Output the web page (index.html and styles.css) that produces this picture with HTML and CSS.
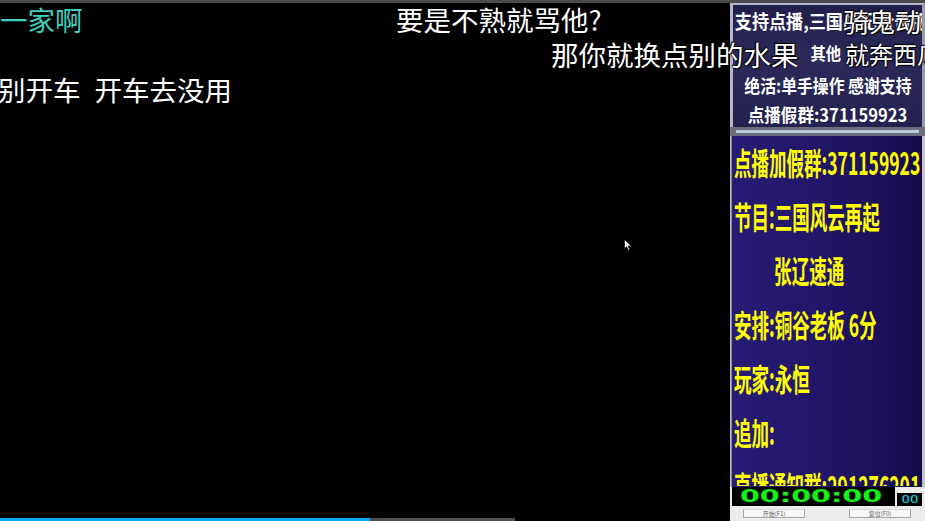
FILE: index.html
```html
<!DOCTYPE html>
<html lang="zh-CN">
<head>
<meta charset="utf-8">
<title>直播画面</title>
<link rel="stylesheet" href="styles.css">
</head>
<body>
<div class="stage">
  <div class="topline"></div>
  <div class="main">
    <div class="video">
      <div class="video-area"></div>
      <div class="progress">
        <div class="progress-played"></div>
        <div class="progress-buffer"></div>
      </div>
    </div>
    <aside class="side">
      <div class="notice">
        <div class="notice-line notice-first">支持点播,三国战纪合击版本</div>
        <div class="notice-line notice-second">其他</div>
        <div class="notice-line notice-center">绝活:单手操作 感谢支持</div>
        <div class="notice-line notice-center notice-last">点播假群:371159923</div>
      </div>
      <div class="divider"><div class="divider-light"></div></div>
      <div class="program">
        <div class="yl">点播加假群:371159923</div>
        <div class="yl">节目:三国风云再起</div>
        <div class="yl yl-indent">张辽速通</div>
        <div class="yl">安排:铜谷老板 6分</div>
        <div class="yl">玩家:永恒</div>
        <div class="yl">追加:</div>
        <div class="yl yl-cut">直播通知群:291276201</div>
      </div>
      <div class="timer">
        <div class="timer-row">
          <div class="clock"><span class="clock-text">00:00:00</span></div>
          <div class="ms"><span class="ms-text">00</span></div>
        </div>
        <div class="timer-buttons">
          <div class="tbtn">开始(F1)</div>
          <div class="tbtn">复位(F0)</div>
        </div>
      </div>
    </aside>
  </div>

  <div class="dm dm-cyan dm-1">一家啊</div>
  <div class="dm dm-2">要是不熟就骂他?</div>
  <div class="dm dm-3">那你就换点别的水果</div>
  <div class="dm dm-4">就奔西瓜</div>
  <div class="dm dm-5">别开车<span class="dm-gap"></span>开车去没用</div>
  <div class="dm dm-6">骑鬼动</div>

  <svg class="cursor" width="8" height="12" viewBox="0 0 8 12">
    <path d="M0.5 0.5 L0.5 9.5 L2.6 7.6 L4.2 11.2 L5.6 10.6 L4.1 7.1 L7 7.1 Z" fill="#fff" stroke="#222" stroke-width="0.8"/>
  </svg>
</div>
</body>
</html>
```

FILE: styles.css
```css
* { box-sizing: border-box; margin: 0; padding: 0; }

html, body {
  width: 925px;
  height: 521px;
  background: #000;
  overflow: hidden;
}

body {
  font-family: "Noto Sans CJK SC", "Noto Sans", sans-serif;
}

.stage {
  position: relative;
  width: 925px;
  height: 521px;
  background: #000;
  overflow: hidden;
  display: flex;
  flex-direction: column;
}

.topline {
  height: 3px;
  flex: 0 0 3px;
  background: #4b4b4b;
}

.main {
  flex: 1;
  display: flex;
  min-height: 0;
}

/* video area */
.video {
  width: 730px;
  flex: 0 0 730px;
  display: flex;
  flex-direction: column;
}

.video-area {
  flex: 1;
  background: #000;
}

.progress {
  height: 3px;
  flex: 0 0 3px;
  display: flex;
}

.progress-played {
  width: 370px;
  background: #08a6ec;
}

.progress-buffer {
  width: 145px;
  background: #4e4e4e;
}

/* side panel */
.side {
  flex: 1;
  display: flex;
  flex-direction: column;
  background: #b9b9c4;
  min-width: 0;
}

.notice {
  height: 124px;
  flex: 0 0 124px;
  margin-left: 1px;
  border-top: 2px solid #b6b6c6;
  border-left: 2px solid #b6b6c6;
  border-right: 3px solid #9a9aaa;
  background: linear-gradient(180deg, #21204c 0%, #2b2a5a 45%, #23214e 100%);
  color: #fff;
  font-weight: 700;
  overflow: hidden;
}

.notice-line {
  white-space: nowrap;
  font-size: 18px;
}

.notice-first {
  font-size: 19px;
  line-height: 31px;
  transform: scaleX(0.9);
  transform-origin: left center;
  padding-left: 2px;
}

.notice-second {
  line-height: 33px;
  padding-left: 86px;
  font-size: 17px;
  transform: scaleX(0.9);
  transform-origin: left center;
}

.notice-center {
  text-align: center;
  line-height: 33px;
  transform: scaleX(0.88);
}

.notice-last {
  line-height: 25px;
  transform: scaleX(0.92);
}

.divider {
  height: 9px;
  flex: 0 0 9px;
  background: #6c6c7c;
  padding: 3px 6px 2px 6px;
}

.divider-light {
  height: 3px;
  background: #b7ccd4;
}

.program {
  flex: 1;
  margin-left: 1px;
  border-left: 1px solid #8c8ca4;
  border-right: 3px solid #c6c6d2;
  background: linear-gradient(90deg, #281b74 0%, #22166a 45%, #1b1058 80%, #150b48 100%);
  padding-left: 2px;
  overflow: hidden;
  min-height: 0;
}

.yl {
  color: #ffff00;
  font-size: 31px;
  font-weight: 700;
  line-height: 54px;
  height: 54px;
  margin-top: -1px;
  margin-bottom: 1px;
  white-space: nowrap;
  transform: scaleX(0.565);
  transform-origin: left center;
}

.yl-cut {
  width: max-content;
  height: 27px;
  overflow: hidden;
  transform-origin: left top;
}

.yl-indent {
  padding-left: 71px;
}

/* timer */
.timer {
  height: 34px;
  flex: 0 0 34px;
  background: #ececec;
  padding: 0 0 0 2px;
  display: flex;
  flex-direction: column;
}

.timer-row {
  display: flex;
  align-items: flex-end;
  gap: 2px;
  height: 19px;
}

.clock {
  width: 163px;
  flex: 0 0 163px;
  height: 19px;
  background: #000;
  display: flex;
  align-items: center;
  padding-left: 8px;
  overflow: hidden;
}

.clock-text {
  display: inline-block;
  font-family: "DejaVu Sans", sans-serif;
  font-weight: 700;
  font-size: 17px;
  line-height: 17px;
  color: #14f014;
  transform: scaleX(1.68);
  transform-origin: left center;
}

.ms {
  width: 25px;
  flex: 0 0 25px;
  height: 13px;
  background: #000;
  display: flex;
  align-items: center;
  justify-content: center;
}

.ms-text {
  display: inline-block;
  font-family: "DejaVu Sans", sans-serif;
  font-size: 11px;
  line-height: 11px;
  color: #10e0f0;
  transform: scaleX(1.2);
}

.timer-buttons {
  display: flex;
  gap: 44px;
  padding: 3px 0 0 11px;
}

.tbtn {
  width: 62px;
  height: 9px;
  border: 1px solid #a8a8a8;
  border-top-color: #d8d8d8;
  background: #f6f6f6;
  font-size: 6px;
  line-height: 7px;
  color: #666;
  text-align: center;
  white-space: nowrap;
  overflow: hidden;
}

/* danmaku (bullet comments, positioned freely over the stream) */
.dm {
  position: absolute;
  font-size: 27.5px;
  line-height: 30px;
  color: #fff;
  white-space: nowrap;
  text-shadow: 0 0 2px #000, 1px 1px 1px #000, -1px -1px 1px #000;
}

.dm-gap {
  display: inline-block;
  width: 14px;
}

.dm-cyan { color: #3fd0c0; }
.dm-1 { left: 0; top: 4px; }
.dm-2 { left: 396px; top: 4px; }
.dm-3 { left: 551px; top: 39px; }
.dm-4 { left: 845px; top: 39px; font-size: 24px; }
.dm-5 { left: -2px; top: 74px; }
.dm-6 { left: 843px; top: 6px; font-size: 26px; }

.cursor {
  position: absolute;
  left: 624px;
  top: 239px;
}
```
